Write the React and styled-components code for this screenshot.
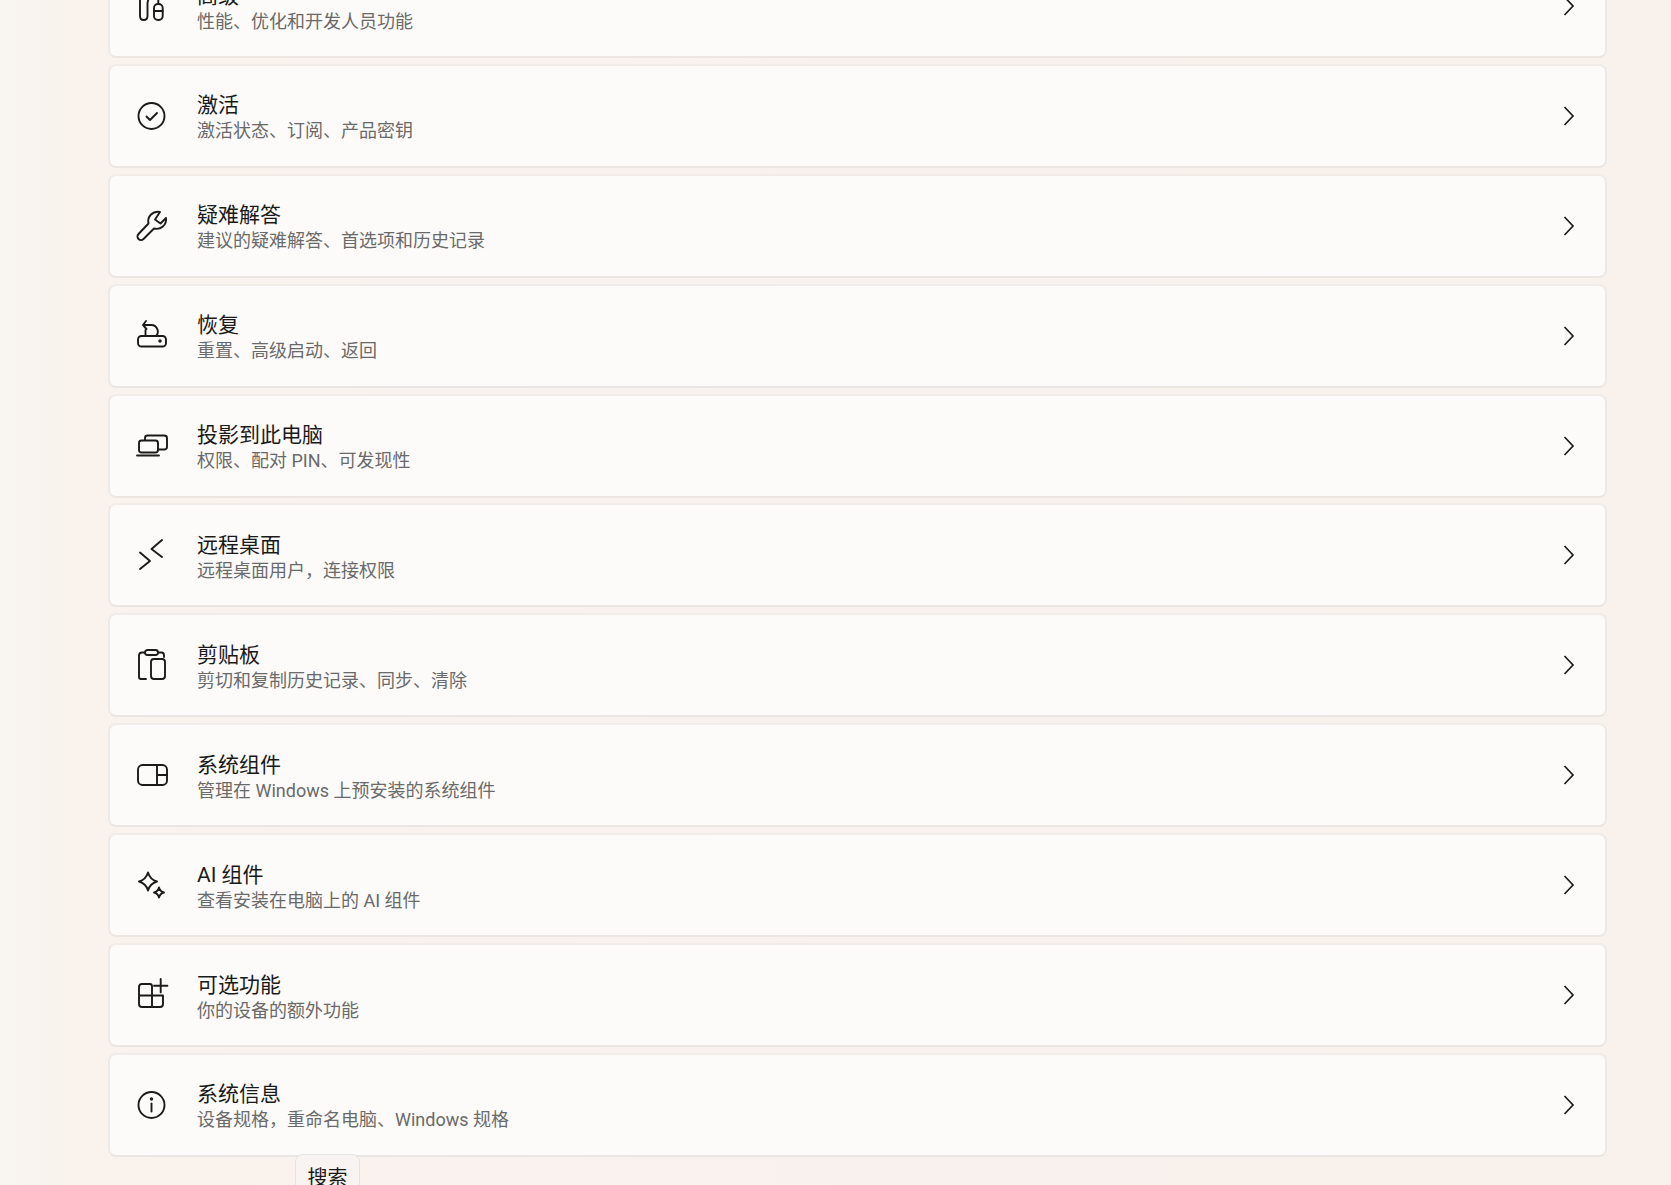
import styled, { createGlobalStyle } from "styled-components";

const GlobalStyle = createGlobalStyle`
  html, body {
    margin: 0;
    height: 100%;
    overflow: hidden;
  }
  body {
    font-family: Roboto, "Noto Sans CJK SC", sans-serif;
  }
`;

const Page = styled.div`
  position: relative;
  height: 1185px;
  overflow: hidden;
  background: linear-gradient(90deg, #f9f5f1 0, #f9f2ed 90px, #f9f1ee 50%, #f9f1eb 100%);
`;

const List = styled.div`
  display: flex;
  flex-direction: column;
  gap: 5.9px;
  margin: -46px 64px 0 108px;
`;

const Card = styled.div`
  display: flex;
  align-items: center;
  box-sizing: border-box;
  height: 104px;
  padding: 0 29px 0 26px;
  background: #fcfbf9;
  border: 2px solid #efe9e5;
  border-top-color: #f1ece8;
  border-bottom-color: #ece6e2;
  border-radius: 8px;
`;

const IconBox = styled.div`
  display: flex;
  align-items: center;
  justify-content: center;
  width: 32px;
  height: 32px;
  flex: none;
  margin-right: 29px;
  color: #1b1b1b;
`;

const Texts = styled.div`
  display: flex;
  flex: 1;
  flex-direction: column;
  padding-top: 5px;
`;

const Title = styled.div`
  font-size: 21px;
  line-height: 25px;
  color: #1a1a1a;
`;

const Sub = styled.div`
  font-size: 18px;
  line-height: 25px;
  color: #6a6a6a;
`;

const Tooltip = styled.div`
  position: absolute;
  left: 295px;
  top: 1154px;
  box-sizing: border-box;
  width: 65px;
  height: 50px;
  padding-top: 9px;
  text-align: center;
  font-size: 20px;
  line-height: 28px;
  color: #1a1a1a;
  background: #f9f3f1;
  border: 1px solid #e8e3e0;
  border-radius: 8px;
`;

const Glyph = ({ children }) => (
  <svg
    width="32"
    height="32"
    viewBox="0 0 32 32"
    fill="none"
    stroke="currentColor"
    strokeWidth="1.9"
    strokeLinecap="round"
    strokeLinejoin="round"
    overflow="visible"
  >
    {children}
  </svg>
);

const Chevron = () => (
  <svg width="14" height="20" viewBox="0 0 14 20" fill="none" stroke="#1b1b1b" strokeWidth="1.7">
    <path d="M2.5 1L11 10L2.5 19" />
  </svg>
);

const rows = [
  {
    title: "高级",
    sub: "性能、优化和开发人员功能",
    icon: (
      <Glyph>
        <path d="M4 8V26Q4 30 7.700 30Q11.500 30 11.500 26V14Q11.500 11 13 8" />
        <rect x="18" y="14" width="8.700" height="16" rx="4" />
        <path d="M18 21H26.700M22.300 14V6" />
      </Glyph>
    ),
  },
  {
    title: "激活",
    sub: "激活状态、订阅、产品密钥",
    icon: (
      <Glyph>
        <circle cx="15.500" cy="16" r="13" />
        <path d="M10.500 16.500L14 20L21 13" />
      </Glyph>
    ),
  },
  {
    title: "疑难解答",
    sub: "建议的疑难解答、首选项和历史记录",
    icon: (
      <Glyph>
        <path d="M24 2A9.500 9.500 0 0 0 12.500 13.500L2.500 24A3.500 3.500 0 0 0 7.500 29L18 18.500A9.500 9.500 0 0 0 30 8L24.500 13.500L19 9.500Z" />
      </Glyph>
    ),
  },
  {
    title: "恢复",
    sub: "重置、高级启动、返回",
    icon: (
      <Glyph>
        <rect x="2" y="16" width="28" height="10.500" rx="3.500" />
        <path d="M7 5H15.500A6.500 6.500 0 0 1 20 16M7 5L10 1M7 5L10.500 9M9.500 10V16" />
        <circle cx="24" cy="21" r="0.800" fill="currentColor" />
      </Glyph>
    ),
  },
  {
    title: "投影到此电脑",
    sub: "权限、配对 PIN、可发现性",
    icon: (
      <Glyph>
        <path d="M9 10V8Q9 5.500 11.500 5.500H28Q31 5.500 31 8V17Q31 19.500 28 19.500H22" />
        <rect x="3" y="10.500" width="19" height="12" rx="2.500" />
        <path d="M1 25.500H23" />
      </Glyph>
    ),
  },
  {
    title: "远程桌面",
    sub: "远程桌面用户，连接权限",
    icon: (
      <Glyph>
        <path d="M4 13.500L14 22L4 30M26 1L15.500 10L26 18" />
      </Glyph>
    ),
  },
  {
    title: "剪贴板",
    sub: "剪切和复制历史记录、同步、清除",
    icon: (
      <Glyph>
        <path d="M10 30H5Q3 30 3 28V6.500Q3 3.500 6 3.500H25.500Q28 3.500 28 6.500V8" />
        <rect x="9" y="1" width="13" height="5" rx="2.500" fill="#fcfbf9" />
        <rect x="15" y="10" width="14" height="20" rx="3" />
      </Glyph>
    ),
  },
  {
    title: "系统组件",
    sub: "管理在 Windows 上预安装的系统组件",
    icon: (
      <Glyph>
        <rect x="2" y="6" width="29" height="20" rx="4.500" />
        <path d="M21 6V26M21 16H31" />
      </Glyph>
    ),
  },
  {
    title: "AI 组件",
    sub: "查看安装在电脑上的 AI 组件",
    icon: (
      <Glyph>
        <path d="M12 3.500Q14 10.500 21 12.500Q14 14.500 12 21.500Q10 14.500 3 12.500Q10 10.500 12 3.500Z" />
        <path d="M23 18.500Q24 22.500 28 23.500Q24 24.500 23 28.500Q22 24.500 18 23.500Q22 22.500 23 18.500Z" />
      </Glyph>
    ),
  },
  {
    title: "可选功能",
    sub: "你的设备的额外功能",
    icon: (
      <Glyph>
        <path d="M16 28V7.500Q16 5 14 5H6Q3 5 3 8V25Q3 28 6 28H24Q27 28 27 25V16.500H3" />
        <path d="M24.700 0V13.400M18 6.700H31.400" />
      </Glyph>
    ),
  },
  {
    title: "系统信息",
    sub: "设备规格，重命名电脑、Windows 规格",
    icon: (
      <Glyph>
        <circle cx="15.500" cy="16" r="13" />
        <path d="M15.500 14.500V22.500" />
        <circle cx="15.500" cy="10" r="0.700" fill="currentColor" />
      </Glyph>
    ),
  },
];

export default function App() {
  return (
    <Page>
      <GlobalStyle />
      <List>
        {rows.map((row) => (
          <Card key={row.title}>
            <IconBox>{row.icon}</IconBox>
            <Texts>
              <Title>{row.title}</Title>
              <Sub>{row.sub}</Sub>
            </Texts>
            <Chevron />
          </Card>
        ))}
      </List>
      <Tooltip>搜索</Tooltip>
    </Page>
  );
}
